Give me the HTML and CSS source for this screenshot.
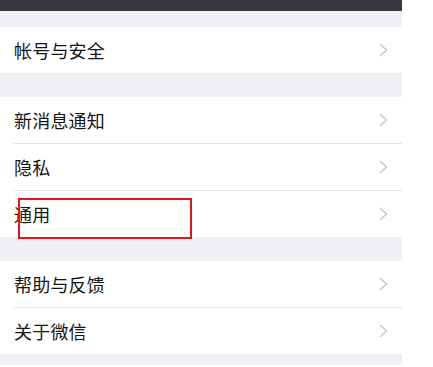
FILE: index.html
```html
<!DOCTYPE html>
<html lang="zh-CN">
<head>
<meta charset="utf-8">
<link rel="stylesheet" href="styles.css">
</head>
<body>
<div class="screen">
  <div class="topbar"></div>
  <div class="gap gap-top"></div>
  <div class="group">
    <div class="row"><span class="label">帐号与安全</span><svg class="chev" viewBox="0 0 9 14"><polyline points="1,1 7.5,7 1,13"/></svg></div>
  </div>
  <div class="gap"></div>
  <div class="group">
    <div class="row"><span class="label">新消息通知</span><svg class="chev" viewBox="0 0 9 14"><polyline points="1,1 7.5,7 1,13"/></svg></div>
    <div class="row"><span class="label">隐私</span><svg class="chev" viewBox="0 0 9 14"><polyline points="1,1 7.5,7 1,13"/></svg></div>
    <div class="row marked"><span class="label">通用</span><svg class="chev" viewBox="0 0 9 14"><polyline points="1,1 7.5,7 1,13"/></svg><div class="highlight"></div></div>
  </div>
  <div class="gap"></div>
  <div class="group">
    <div class="row"><span class="label">帮助与反馈</span><svg class="chev" viewBox="0 0 9 14"><polyline points="1,1 7.5,7 1,13"/></svg></div>
    <div class="row"><span class="label">关于微信</span><svg class="chev" viewBox="0 0 9 14"><polyline points="1,1 7.5,7 1,13"/></svg></div>
  </div>
  <div class="gap gap-bottom"></div>
</div>
</body>
</html>
```

FILE: styles.css
```css
html, body {
  margin: 0;
  padding: 0;
  background: #ffffff;
}
body {
  font-family: "Noto Sans CJK SC", "Noto Sans", sans-serif;
}
.screen {
  width: 402px;
  background: #efeff4;
  display: flex;
  flex-direction: column;
}
.topbar {
  height: 11px;
  background: #39373d;
}
.gap {
  height: 24px;
}
.gap-top {
  height: 16px;
}
.gap-bottom {
  height: 11px;
}
.group {
  background: #ffffff;
  display: flex;
  flex-direction: column;
}
.row {
  position: relative;
  height: 46px;
  display: flex;
  align-items: center;
  justify-content: space-between;
  padding: 0 14px;
}
.row + .row {
  border-top: 1px solid #e4e4e6;
  margin-left: 13px;
  padding-left: 1px;
}
.label {
  font-size: 18px;
  color: #151515;
  line-height: 1;
  letter-spacing: 0.2px;
}
.chev {
  width: 9px;
  height: 14px;
  fill: none;
  stroke: #c4c4c8;
  stroke-width: 1.4;
}
.highlight {
  position: absolute;
  left: 5px;
  top: 7px;
  width: 170px;
  height: 37px;
  border: 2px solid #e5141b;
}
```
